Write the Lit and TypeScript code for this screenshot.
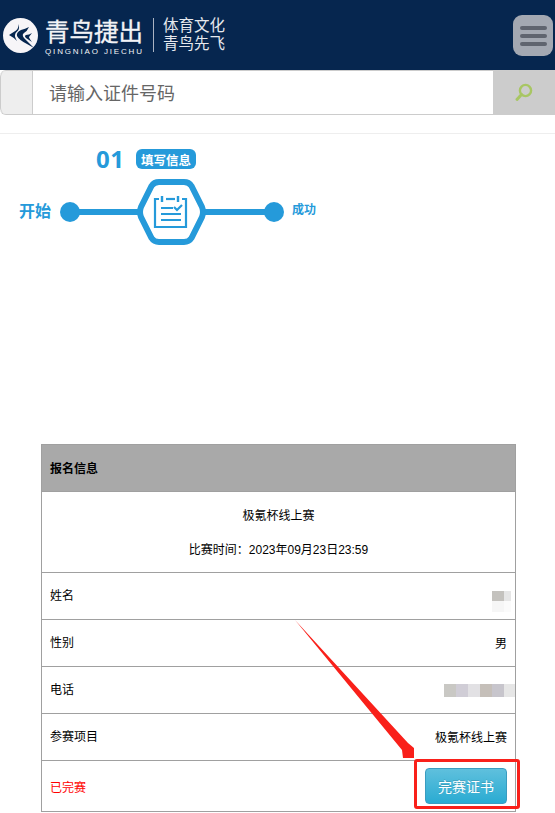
import { LitElement, html, css, svg } from "lit";
import { customElement } from "lit/decorators.js";

@customElement("app-root")
export class AppRoot extends LitElement {
  static styles = css`
    :host { display: block; width: 555px; height: 813px; overflow: hidden; position: relative; background: #fff; font-family: "Liberation Sans", "Noto Sans CJK SC", sans-serif; font-size: 12px; color: #000; }
    * { box-sizing: border-box; }
    .top { height: 70px; background: #06264f; display: flex; align-items: center; padding: 0 2px 0 3px; }
    .mark { width: 35px; height: 35px; flex: none; display: block; }
    .brand { margin-left: 7px; margin-top: 4px; width: 101px; color: #f2f3f6; display: flex; flex-direction: column; }
    .brand b { font-weight: 400; font-size: 24.5px; line-height: 28px; white-space: nowrap; -webkit-text-stroke: 0.3px #f2f3f6; }
    .brand small { font-size: 8px; line-height: 9px; letter-spacing: 1.85px; white-space: nowrap; }
    .sep { width: 1px; height: 34px; background: #aab3c2; margin-left: 7px; }
    .slogan { margin-left: 9px; color: #e6e9ee; font-size: 15.5px; line-height: 18px; white-space: nowrap; }
    .menu { margin-left: auto; margin-top: 1px; width: 40px; height: 41px; border-radius: 9px; background: #a3a8b2; display: flex; flex-direction: column; justify-content: center; align-items: center; gap: 4px; }
    .menu i { display: block; width: 27px; height: 4px; border-radius: 2px; background: #5f646f; }
    .search { height: 45px; display: flex; border: 1px solid #ccc; border-left: 0; border-right: 0; border-radius: 6px 0 0 6px; overflow: hidden; }
    .addon { width: 33px; background: #eee; border-right: 1px solid #ccc; border-left: 1px solid #ccc; border-radius: 6px 0 0 6px; }
    .field { flex: 1; padding-left: 16px; padding-bottom: 2px; display: flex; align-items: center; font-size: 18px; color: #666; }
    .go { width: 62px; background: #ccc; display: flex; align-items: center; justify-content: center; }
    .rule { height: 1px; background: #eee; margin-top: 18px; }
    .steps { height: 310px; padding-top: 13px; color: #259ada; }
    .head { display: flex; align-items: center; padding-left: 96px; height: 24px; }
    .num { font-family: "Open Sans", sans-serif; font-size: 24px; font-weight: 700; line-height: 24px; width: 40px; letter-spacing: .6px; }
    .tag { width: 60px; height: 20px; border-radius: 6px; background: #259ada; color: #fff; font-size: 12.5px; font-weight: 700; display: flex; align-items: center; justify-content: center; }
    .track { display: flex; align-items: center; padding-left: 19px; margin-top: 8px; height: 66px; }
    .begin { width: 32px; font-size: 16px; font-weight: 700; line-height: 20px; }
    .dot { width: 20px; height: 20px; border-radius: 50%; background: #259ada; flex: none; }
    .begin + .dot { margin-left: 9px; }
    .line { height: 6px; background: #259ada; flex: none; margin: 0 -2px; }
    .l1 { width: 61px; }
    .l2 { width: 62px; }
    .hex { width: 69px; height: 66px; flex: none; display: block; position: relative; }
    .end { margin-left: 8px; font-size: 12px; font-weight: 700; margin-top: -8px; }
    .table { margin-left: 41px; width: 475px; border-left: 1px solid #a0a0a0; border-right: 1px solid #a0a0a0; border-top: 1px solid #a0a0a0; }
    .row { height: 47px; border-bottom: 1px solid #a0a0a0; display: flex; align-items: center; justify-content: space-between; padding: 0 8px; }
    .row.std { padding-bottom: 4px; }
    .row.std span + span { margin-top: 2px; }
    .row.title { background: #a9a9a9; font-weight: 700; padding-bottom: 2px; }
    .row.info { height: 81px; flex-direction: column; justify-content: center; gap: 18px; padding-top: 1px; }
    .row.info span { line-height: 16px; }
    .row.last { height: 51px; }
    .row.last span { color: #f00; }
    .btn { width: 82px; height: 36px; border-radius: 4px; border: 1px solid #3a9cc0; background: linear-gradient(#5fc0dd, #2aabd2); color: #fff; font-size: 14px; display: flex; align-items: center; justify-content: center; text-shadow: 0 -1px 0 rgba(0,0,0,.15); }
    .mosaic { display: flex; flex-wrap: wrap; }
    .mosaic i { display: block; height: 13px; width: 12px; }
    .mosaic.name { width: 19px; margin-right: -4px; margin-top: 14px; }
    .mosaic.name i { height: 10px; }
    .mosaic.name i:nth-child(n+3) { height: 11px; }
    .mosaic.name i:nth-child(even) { width: 7px; }
    .mosaic.phone { margin-right: -8px; margin-top: 4px; }
    .mosaic.phone i:last-child { width: 11px; }
    .mark-box { position: absolute; left: 414px; top: 759px; width: 106px; height: 50px; border: 3px solid #f9201a; border-radius: 3px; }
    .arrow { position: absolute; left: 290px; top: 615px; width: 130px; height: 150px; }
  `;

  render() {
    return html`
      <div class="top">
        <svg class="mark" viewBox="0 0 35 35">
          <circle cx="17.5" cy="17.5" r="17.5" fill="#f7f5f8"></circle>
          <path d="M15 6 Q16 10 13 12.5 L6 17 Q10 19 14 23 Q11.5 18.5 12 17 Q12.5 14.5 15 12.5 Q17 10 15 6 Z" fill="#06264f"></path>
          <path d="M26 9 Q22 11 18 12 Q13 14.5 14 18 Q16 22 24 26 L31 30 Q24 23 21 20 Q18.5 16.5 21 15 Q24 13.5 26 9 Z" fill="#06264f"></path>
          <path d="M29 15 Q26 17 23 17 Q21 18 23 20 L29 24 Q26 20 26 19 Q27 17.5 29 15 Z" fill="#06264f"></path>
        </svg>
        <div class="brand"><b>青鸟捷出</b><small>QINGNIAO JIECHU</small></div>
        <div class="sep"></div>
        <div class="slogan">体育文化<br />青鸟先飞</div>
        <div class="menu"><i></i><i></i><i></i></div>
      </div>
      <div class="search">
        <div class="addon"></div>
        <div class="field">请输入证件号码</div>
        <div class="go">
          <svg width="20" height="20" viewBox="0 0 20 20">
            <circle cx="11.5" cy="7.5" r="5.6" fill="none" stroke="#a8c663" stroke-width="2.4"></circle>
            <path d="M7.5 11.5 L3 16.5" stroke="#a8c663" stroke-width="3" stroke-linecap="round"></path>
          </svg>
        </div>
      </div>
      <div class="rule"></div>
      <div class="steps">
        <div class="head"><div class="num">01</div><div class="tag">填写信息</div></div>
        <div class="track">
          <div class="begin">开始</div>
          <div class="dot"></div>
          <div class="line l1"></div>
          <svg class="hex" viewBox="0 0 69 66">
            <path d="M22 3 H47 Q52 3 54.5 7 L65 28 Q67 33 65 38 L54.5 59 Q52 63 47 63 H22 Q17 63 14.5 59 L4 38 Q2 33 4 28 L14.5 7 Q17 3 22 3 Z" fill="#fff" stroke="#259ada" stroke-width="6"></path>
            <g fill="none" stroke="#259ada" stroke-width="2.2">
              <path d="M22 20 H18 V48 H49 V20 H45"></path>
              <path d="M29 20 H38"></path>
              <path d="M25 17 V23 M41 17 V23" stroke-width="2.4"></path>
              <path d="M24 29 H36 M24 35 H44 M24 41 H44"></path>
              <path d="M37 28 L40 31 L45 26"></path>
            </g>
          </svg>
          <div class="line l2"></div>
          <div class="dot"></div>
          <div class="end">成功</div>
        </div>
      </div>
      <div class="table">
        <div class="row title">报名信息</div>
        <div class="row info"><span>极氪杯线上赛</span><span>比赛时间：2023年09月23日23:59</span></div>
        <div class="row std"><span>姓名</span>${this.mosaic("name", ["#c4c2be", "#e6e6e6", "#f6f6f6", "#fbfbfb"])}</div>
        <div class="row std"><span>性别</span><span>男</span></div>
        <div class="row std"><span>电话</span>${this.mosaic("phone", ["#c9c8c4", "#d0cdd6", "#e2e1e4", "#c5bfb9", "#c7c5cc", "#e6e6e6"])}</div>
        <div class="row std"><span>参赛项目</span><span>极氪杯线上赛</span></div>
        <div class="row last"><span>已完赛</span><div class="btn">完赛证书</div></div>
      </div>
      <div class="mark-box"></div>
      <svg class="arrow" viewBox="0 0 130 150">
        ${svg`<polygon points="5,5 118,128 124,133 124,143 113,143 112,135" fill="#f9201a"></polygon>`}
      </svg>
    `;
  }

  mosaic(kind: string, colors: string[]) {
    return html`<div class="mosaic ${kind}">${colors.map((c) => html`<i style="background:${c}"></i>`)}</div>`;
  }
}
